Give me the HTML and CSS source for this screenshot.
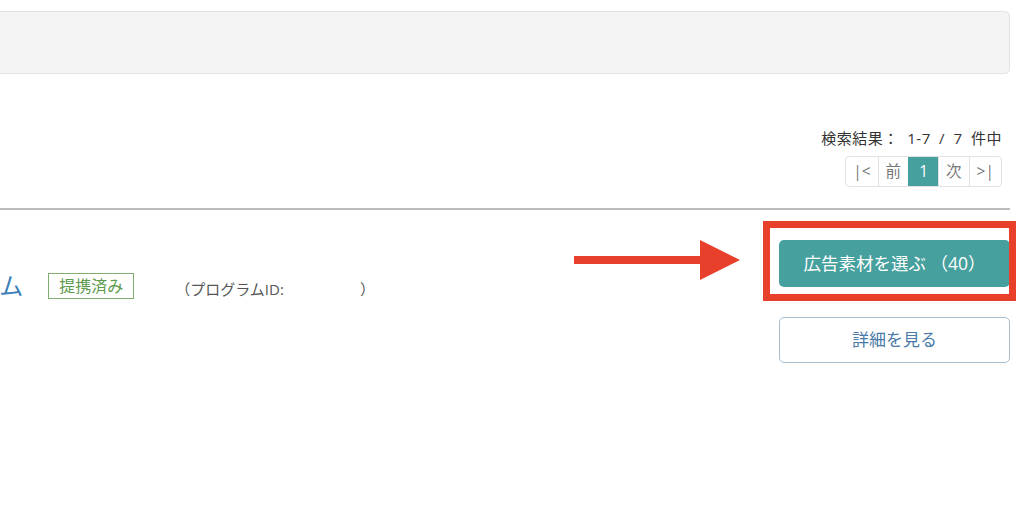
FILE: index.html
```
<!DOCTYPE html>
<html>

<head>
  <title>プログラム一覧</title>
  <link rel="stylesheet" href="styles.css">
</head>

<body>
  <div class="page">
    <!-- Search conditions -->
    <div class="search-box"></div>

    <!-- Result count and pager -->
    <div class="results">
      <p class="result-count">検索結果： 1-7 / 7 件中</p>
      <ul class="pager">
        <li>|&lt;</li>
        <li>前</li>
        <li class="current">1</li>
        <li>次</li>
        <li>&gt;|</li>
      </ul>
    </div>

    <hr class="divider">

    <!-- Program row -->
    <div class="program">
      <div class="program-info">
        <div class="program-head">
          <a class="program-name" href="#">プログラム</a>
          <span class="badge">提携済み</span>
          <span class="program-id">（プログラムID:<span class="id-value"></span>）</span>
        </div>
      </div>

      <div class="program-actions">
        <div class="arrow">
          <span class="arrow-line"></span>
          <span class="arrow-head"></span>
        </div>
        <div class="highlight"></div>
        <a class="btn btn-primary" href="#">広告素材を選ぶ （40）</a>
        <a class="btn btn-outline" href="#">詳細を見る</a>
      </div>
    </div>
  </div>
</body>

</html>
```

FILE: styles.css
```
/* Reset some default styles */
body,
p,
ul,
hr {
  margin: 0;
  padding: 0;
}

body {
  font-family: 'Open Sans', 'Noto Sans CJK JP', sans-serif;
  background-color: #fff;
  color: #333;
  overflow: hidden;
}

.page {
  padding: 11px 14px 0 0;
}

.search-box {
  height: 61px;
  margin-left: -6px;
  background-color: #f4f4f4;
  border: 1px solid #e3e3e3;
  border-radius: 5px;
}

.results {
  display: flex;
  flex-direction: column;
  align-items: flex-end;
  padding-right: 8px;
  margin-top: 54px;
}

.result-count {
  font-size: 15px;
  line-height: 20px;
  color: #333;
  word-spacing: 4px;
  letter-spacing: 0.5px;
}

.pager {
  list-style: none;
  display: flex;
  margin-top: 8px;
  border: 1px solid #e2e2e2;
  border-radius: 4px;
  overflow: hidden;
}

.pager li {
  height: 29px;
  line-height: 29px;
  padding: 0 7px;
  min-width: 15px;
  text-align: center;
  font-size: 15.5px;
  color: #777;
  border-left: 1px solid #e2e2e2;
}

.pager li:first-child {
  border-left: none;
}

.pager li.current {
  background-color: #46a09e;
  /* Teal */
  color: #fff;
  border-left-color: #46a09e;
}

.divider {
  margin-top: 21px;
  border: none;
  height: 2px;
  background-color: #bdbdbd;
}

.program {
  display: flex;
  justify-content: space-between;
}

.program-head {
  display: flex;
  align-items: center;
  margin-top: 62px;
  margin-left: -96px;
}

.program-name {
  font-size: 24px;
  line-height: 25px;
  color: #3a7fb8;
  text-decoration: none;
}

.badge {
  margin-left: 25px;
  padding: 0 10px;
  height: 24px;
  line-height: 24px;
  font-size: 16px;
  color: #5c9a4c;
  border: 1px solid #7fae70;
}

.program-id {
  margin-left: 41px;
  margin-top: 6px;
  font-size: 15px;
  color: #555;
}

.id-value {
  display: inline-block;
  width: 76px;
}

.program-actions {
  position: relative;
  width: 231px;
  padding-top: 30px;
  display: flex;
  flex-direction: column;
  gap: 30px;
}

.btn {
  display: block;
  box-sizing: border-box;
  text-align: center;
  text-decoration: none;
  font-size: 17px;
  border-radius: 5px;
}

.btn-primary {
  height: 47px;
  line-height: 47px;
  font-size: 17.5px;
  background-color: #46a09e;
  color: #fff;
}

.btn-outline {
  height: 46px;
  line-height: 44px;
  border: 1px solid #a6bdd0;
  color: #4a7aa8;
}

/* Annotation: red frame around the button */
.highlight {
  position: absolute;
  left: -16px;
  top: 11px;
  width: 253px;
  height: 80px;
  box-sizing: border-box;
  border: 7px solid #e8402a;
  z-index: 2;
}

/* Annotation: arrow pointing at the button */
.arrow {
  position: absolute;
  left: -205px;
  top: 30px;
  width: 166px;
  height: 40px;
  display: flex;
  align-items: center;
}

.arrow-line {
  width: 126px;
  height: 8px;
  background-color: #e8402a;
}

.arrow-head {
  width: 0;
  height: 0;
  border-top: 20px solid transparent;
  border-bottom: 20px solid transparent;
  border-left: 40px solid #e8402a;
}
```
